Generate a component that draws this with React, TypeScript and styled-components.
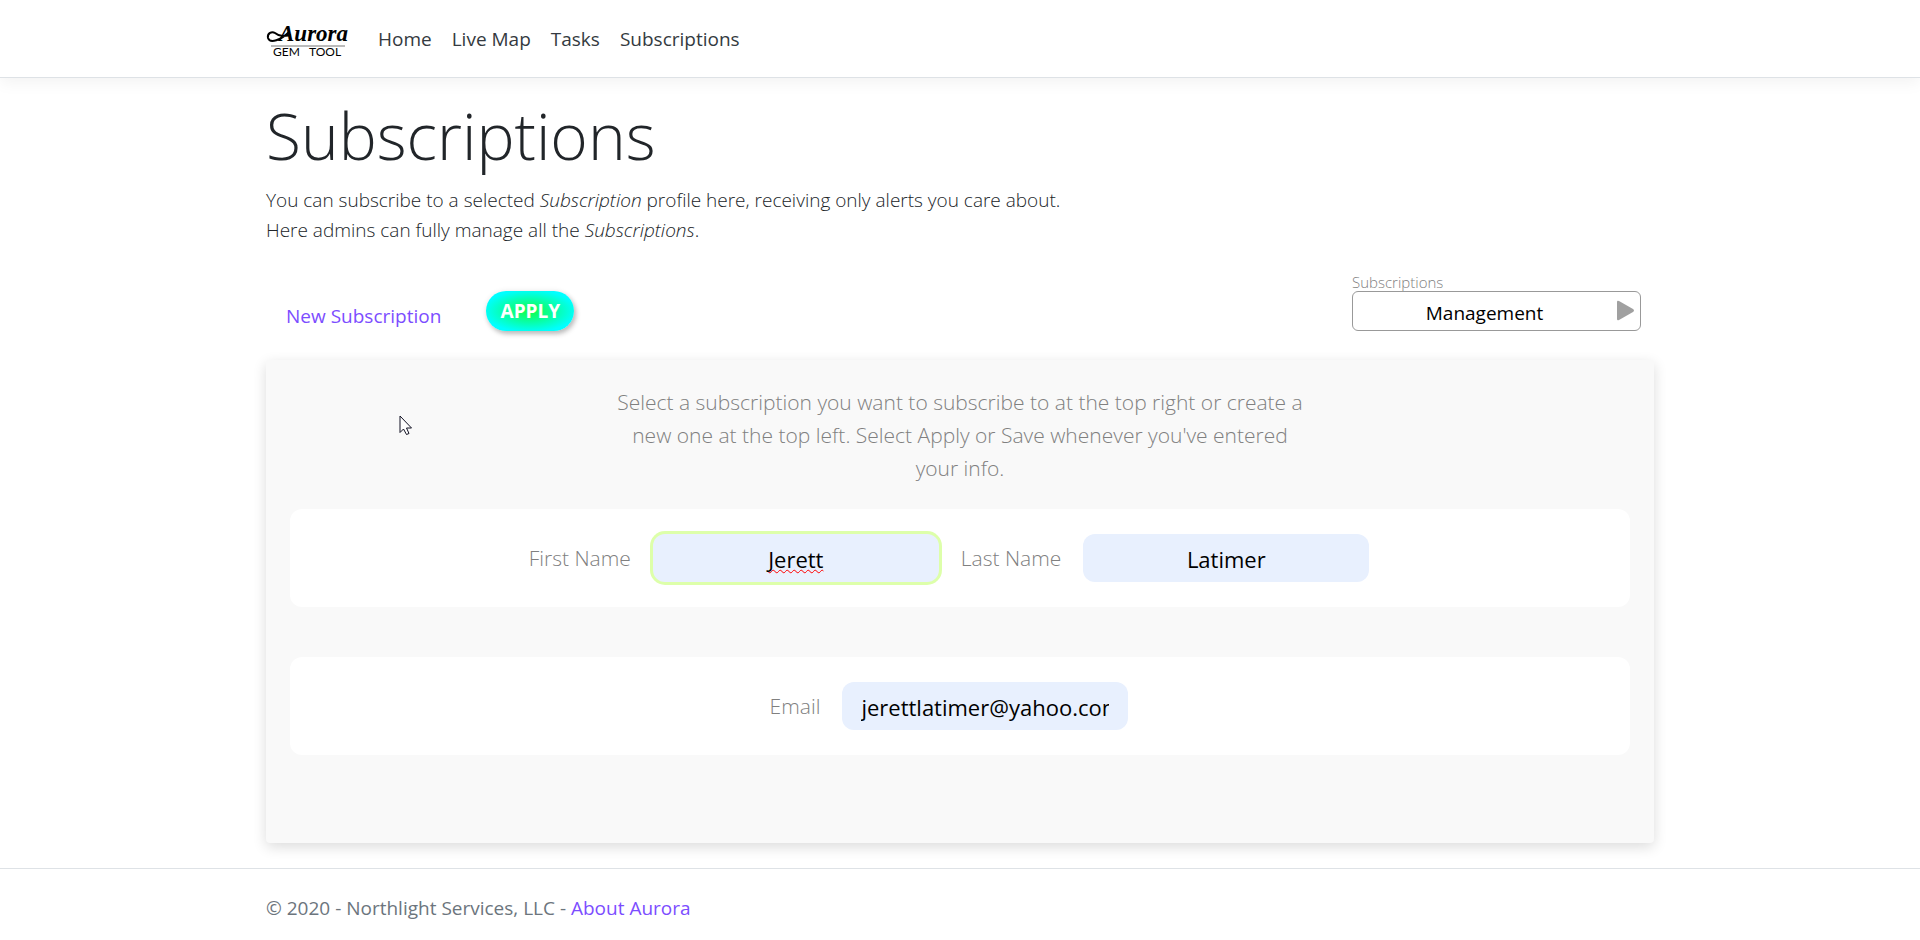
import React from "react";
import styled, { createGlobalStyle } from "styled-components";

const GlobalStyle = createGlobalStyle`
  *, *::before, *::after { box-sizing: border-box; }
  body {
    margin: 0;
    background: #fff;
    color: #212529;
    font-family: "Open Sans", "Noto Sans", sans-serif;
    font-size: 19px;
    line-height: 30px;
  }
`;

const Container = styled.div`
  width: 100%;
  max-width: 1388px;
  margin: 0 auto;
`;

const Header = styled.header`
  border-bottom: 1px solid #dee2e6;
  box-shadow: 0 5px 15px rgba(0, 0, 0, 0.05);
`;

const Navbar = styled(Container)`
  display: flex;
  align-items: center;
  height: 77px;
`;

const Brand = styled.a`
  display: block;
  width: 112px;
  height: 38px;
  svg { display: block; }
`;

const NavLinks = styled.nav`
  display: flex;
  gap: 20px;
`;

const NavLink = styled.a`
  color: #343a40;
  text-decoration: none;
`;

const Title = styled.h1`
  margin: 14px 0 5px;
  font-size: 64px;
  font-weight: 300;
  line-height: 88px;
`;

const Intro = styled.p`
  margin: 0;
  font-weight: 300;
`;

const Toolbar = styled.div`
  display: flex;
  align-items: flex-end;
  margin-top: 28px;
  padding: 0 13px 0 20px;
`;

const TextLink = styled.a`
  color: #7c4dff;
  text-decoration: none;
`;

const ApplyButton = styled.button`
  width: 88px;
  height: 40px;
  margin-left: 45px;
  padding: 0;
  border: 0;
  border-radius: 20px;
  background: radial-gradient(#1f4, #0ff 75%);
  box-shadow: 2px 3px 5px rgba(0, 0, 0, 0.25), 0 0 4px 2px rgba(0, 0, 0, 0.04);
  color: #fff;
  font: 700 19px/24px "Open Sans", sans-serif;
`;

const SelectField = styled.div`
  width: 289px;
  margin-left: auto;
`;

const SelectLabel = styled.label`
  display: block;
  color: #808080;
  font-size: 15px;
  font-weight: 300;
  line-height: 18px;
`;

const SelectBox = styled.div`
  position: relative;
`;

const Select = styled.select`
  display: block;
  width: 100%;
  height: 40px;
  padding: 3px 24px 0 0;
  border: 1px solid #999;
  border-radius: 6px;
  appearance: none;
  background: #fff;
  color: #000;
  font: 400 19px/30px "Open Sans", sans-serif;
  text-align: center;
  text-align-last: center;
`;

const SelectArrow = styled.svg`
  position: absolute;
  top: 9px;
  right: 7px;
  pointer-events: none;
`;

const Panel = styled.section`
  position: relative;
  display: flex;
  flex-direction: column;
  margin-top: 29px;
  padding: 26px 24px 88px;
  border-radius: 4px;
  background: #f9f9f9;
  box-shadow: 0 4px 14px rgba(0, 0, 0, 0.14);
`;

const Hint = styled.p`
  width: 700px;
  max-width: 100%;
  margin: 0 auto 24px;
  color: #808080;
  font-size: 21px;
  font-weight: 300;
  line-height: 33px;
  text-align: center;
`;

const FieldRow = styled.div`
  display: flex;
  align-items: center;
  justify-content: center;
  gap: 22px;
  min-height: 98px;
  padding-right: 22px;
  border-radius: 12px;
  background: #fff;
  & + & { margin-top: 50px; }
`;

const Field = styled.div`
  display: flex;
  align-items: center;
  gap: 22px;
`;

const FieldLabel = styled.label`
  color: #808080;
  font-size: 21px;
  font-weight: 300;
`;

const TextInput = styled.input<{ $highlighted?: boolean }>`
  width: 286px;
  height: 48px;
  padding: 2px 19px 0;
  border: 0;
  border-radius: 12px;
  background: #e8f0fe;
  box-shadow: ${(p) => (p.$highlighted ? "0 0 0 3px #dfa" : "none")};
  color: #000;
  font: 400 22px/30px "Open Sans", sans-serif;
  text-align: center;
  text-decoration: ${(p) => (p.$highlighted ? "underline wavy #f00 1px" : "none")};
  text-decoration-skip-ink: none;
`;

const Pointer = styled.svg`
  position: absolute;
  top: 55px;
  left: 133px;
  pointer-events: none;
`;

const Footer = styled.footer`
  margin-top: 25px;
  border-top: 1px solid #dee2e6;
  color: #6c757d;
  line-height: 78px;
`;

const Logo = () => (
  <svg width="84" height="38" viewBox="0 0 84 38" role="img" aria-label="Aurora Gem Tool">
    <path d="M23 12 C15 20 4 24 2 18 C1 13 6 11 9 13 C14 17 18 16 24 15" fill="none" stroke="#000" strokeWidth="2" strokeLinecap="round" />
    <text x="13" y="21" fontFamily="Liberation Serif, serif" fontSize="23" fontStyle="italic" fontWeight="700">Aurora</text>
    <rect x="5" y="25" width="74" height="2" fill="#bbb" />
    <text x="7" y="36" fontFamily="Lato, sans-serif" fontSize="12">GEM</text>
    <text x="43" y="36" fontFamily="Lato, sans-serif" fontSize="12">TOOL</text>
  </svg>
);

export default function App() {
  return (
    <>
      <GlobalStyle />
      <Header>
        <Navbar>
          <Brand href="#"><Logo /></Brand>
          <NavLinks>
            <NavLink href="#home">Home</NavLink>
            <NavLink href="#map">Live Map</NavLink>
            <NavLink href="#tasks">Tasks</NavLink>
            <NavLink href="#subscriptions">Subscriptions</NavLink>
          </NavLinks>
        </Navbar>
      </Header>
      <Container as="main">
        <Title>Subscriptions</Title>
        <Intro>
          You can subscribe to a selected <em>Subscription</em> profile here, receiving only alerts you care about.
          <br />
          Here admins can fully manage all the <em>Subscriptions</em>.
        </Intro>
        <Toolbar>
          <TextLink href="#new">New Subscription</TextLink>
          <ApplyButton type="button">APPLY</ApplyButton>
          <SelectField>
            <SelectLabel htmlFor="subscription">Subscriptions</SelectLabel>
            <SelectBox>
              <Select id="subscription" defaultValue="Management">
                <option>Management</option>
              </Select>
              <SelectArrow width="18" height="21" viewBox="0 0 18 21" aria-hidden="true">
                <path d="M1 2 Q1 0 3 1 L17 9 Q19 10.5 17 12 L3 20 Q1 21 1 19 Z" fill="#a0a0a0" />
              </SelectArrow>
            </SelectBox>
          </SelectField>
        </Toolbar>
        <Panel>
          <Hint>
            Select a subscription you want to subscribe to at the top right or create a new one at the top left. Select
            Apply or Save whenever you've entered your info.
          </Hint>
          <FieldRow>
            <Field>
              <FieldLabel htmlFor="first">First Name</FieldLabel>
              <TextInput id="first" $highlighted defaultValue="Jerett" />
            </Field>
            <Field>
              <FieldLabel htmlFor="last">Last Name</FieldLabel>
              <TextInput id="last" defaultValue="Latimer" />
            </Field>
          </FieldRow>
          <FieldRow>
            <Field>
              <FieldLabel htmlFor="email">Email</FieldLabel>
              <TextInput id="email" type="email" defaultValue="jerettlatimer@yahoo.com" />
            </Field>
          </FieldRow>
          <Pointer width="14" height="21" viewBox="0 0 14 21" aria-hidden="true">
            <path d="M1 1 V17.500 L4.500 14 L7.500 19.500 L10 18.500 L7.500 13 H12.500 Z" fill="#fff" stroke="#112" strokeWidth="1" />
          </Pointer>
        </Panel>
      </Container>
      <Footer>
        <Container>
          © 2020 - Northlight Services, LLC - <TextLink href="#about">About Aurora</TextLink>
        </Container>
      </Footer>
    </>
  );
}
